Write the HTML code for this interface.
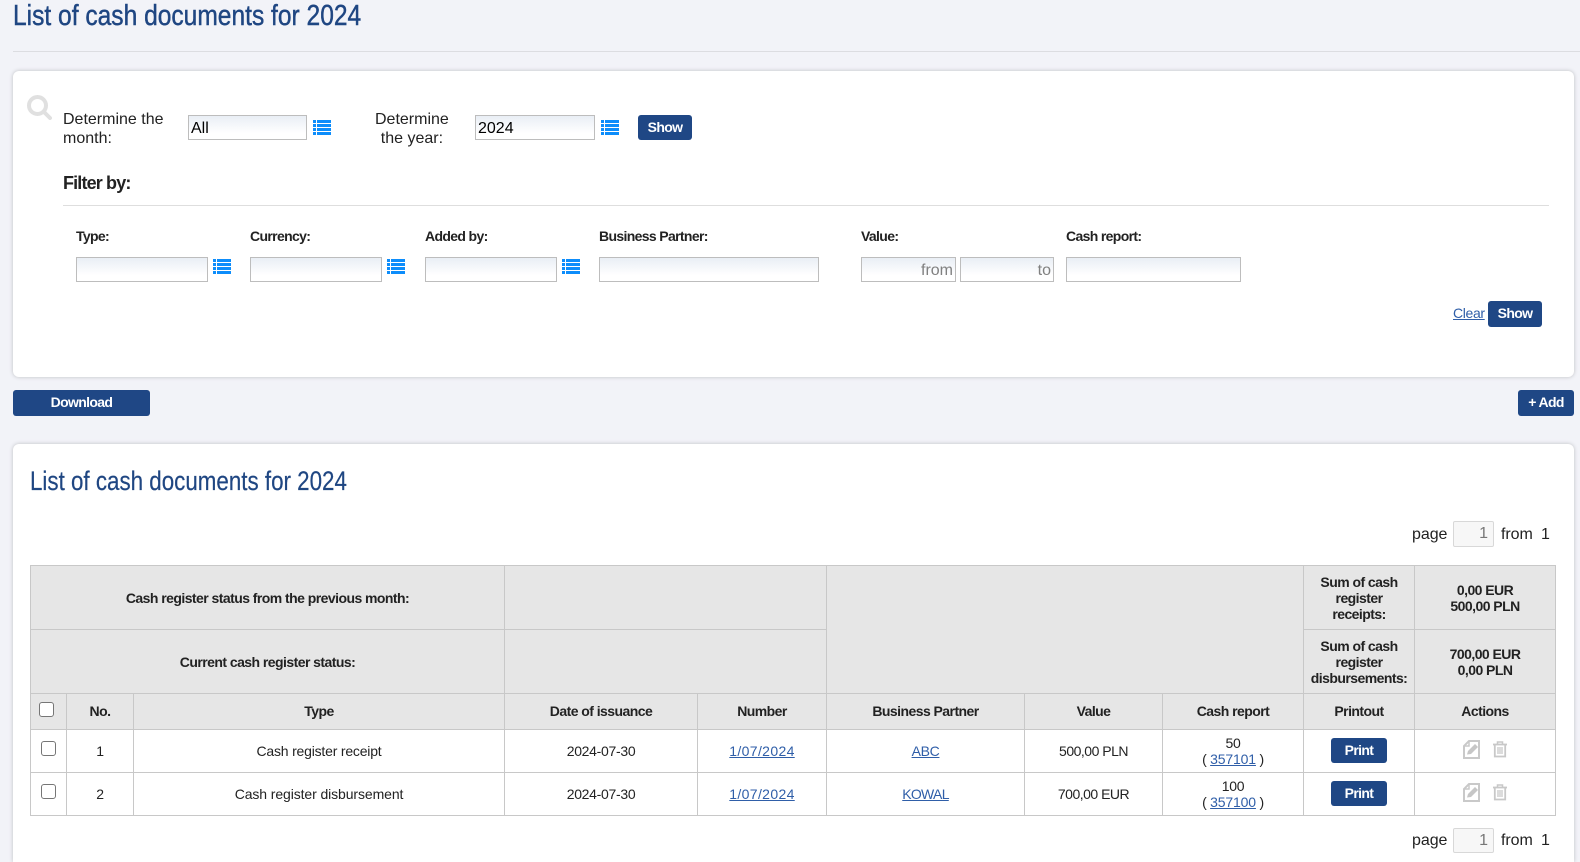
<!DOCTYPE html>
<html lang="en"><head><meta charset="utf-8"><title>List of cash documents for 2024</title>
<style>
*{box-sizing:border-box}
html,body{margin:0;padding:0;width:1580px;height:862px;overflow:hidden}
body{background:#f2f3f8;position:relative;font-family:"Liberation Sans",sans-serif;color:#222;font-size:14px}
.a{position:absolute;white-space:nowrap}
.card{position:absolute;left:13px;width:1561px;background:#fff;border-radius:6px;box-shadow:0 0 4px rgba(0,0,0,.22)}
.title{color:#1f4682;transform-origin:0 0;line-height:30px}
.lbl{font-size:16px;line-height:19px;letter-spacing:0}
.b{font-weight:bold;font-size:14px;letter-spacing:-.65px;line-height:16px}
.inp{position:absolute;height:25px;border:1px solid #bdbdbd;background:linear-gradient(#e9eef5,#fff 75%);font-size:16px;line-height:25px;padding:0 2px;color:#000}
.ph{color:#808080;text-align:right}
.btn{position:absolute;background:#1f4785;color:#fff;border-radius:3px;font-weight:bold;font-size:14px;letter-spacing:-.65px;text-align:center;height:26px;line-height:25px}
.ico{position:absolute;width:18px;height:15px}
a{color:#2f5ea8;text-decoration:underline}
table{position:absolute;left:30px;top:565px;width:1525px;table-layout:fixed;border-collapse:collapse;font-size:14px;line-height:16px;text-align:center}
th,td{border:1px solid #c8c8c8;padding:0;letter-spacing:-.3px;position:relative}
th{background:#e6e6e6;font-weight:bold;color:#222;letter-spacing:-.55px}
.h3 th{padding-bottom:2px}
.cb{position:absolute;width:15px;height:15px;background:#fff;border:1px solid #767676;border-radius:3px}
.pg{position:absolute;width:41px;height:26px;background:#f7f7f7;border:1px solid #d8d8d8;border-radius:2px;color:#777;font-size:16px;line-height:23px;text-align:right;padding-right:5px}
.n1{letter-spacing:.35px}
.n2{letter-spacing:-.5px}
.n3{letter-spacing:-.1px}
.n4{letter-spacing:-.2px}
.n5{letter-spacing:-.7px}
.n6{letter-spacing:-.15px}
</style></head><body>
<svg width="0" height="0" style="position:absolute"><defs>
<g id="l" fill="#0d8dfb"><rect x="0" y="0" width="3" height="3"/><rect x="4" y="0" width="14" height="3"/><rect x="0" y="4" width="3" height="3"/><rect x="4" y="4" width="14" height="3"/><rect x="0" y="8" width="3" height="3"/><rect x="4" y="8" width="14" height="3"/><rect x="0" y="12" width="3" height="3"/><rect x="4" y="12" width="14" height="3"/></g>
<g id="e"><path d="M6 1H16V18H1V6Z" fill="none" stroke="#c9c9c9" stroke-width="2"/><path d="M1 6H6V1" fill="none" stroke="#c9c9c9" stroke-width="1.500"/><path d="M4 14.500L5 11L12 4L15 7L8 14Z" fill="#c6c6c6"/></g>
<g id="t" fill="none" stroke="#c8c8c8"><path d="M0 3.500H14" stroke-width="1.800"/><path d="M4.500 3V1H9.500V3" stroke-width="1.500"/><path d="M1.800 4V15.500H12.200V4" stroke-width="1.800"/><path d="M5 6V13M7 6V13M9 6V13" stroke-width="1.300"/></g>
</defs></svg>

<div class="a title" style="left:13px;top:1px;font-size:29px;transform:scaleX(.847);-webkit-text-stroke:.45px #1f4682">List of cash documents for 2024</div>
<div class="a" style="left:13px;top:51px;width:1567px;height:1px;background:#dcdde1"></div>

<div class="card" style="top:71px;height:306px"></div>
<svg class="a" style="left:27px;top:95px" width="25" height="25" viewBox="0 0 25 25"><circle cx="10.500" cy="10.500" r="8.500" fill="none" stroke="#e0e0e0" stroke-width="4"/><path d="M16.500 16.500L23 23" stroke="#e0e0e0" stroke-width="4" stroke-linecap="round"/></svg>
<div class="a lbl" style="left:63px;top:109px;padding-top:1px">Determine the<br>month:</div>
<div class="inp" style="left:188px;top:115px;width:119px">All</div>
<svg class="ico" style="left:313px;top:120px"><use href="#l"/></svg>
<div class="a lbl" style="left:375px;top:110px;text-align:center">Determine<br>the year:</div>
<div class="inp" style="left:475px;top:115px;width:120px">2024</div>
<svg class="ico" style="left:601px;top:120px"><use href="#l"/></svg>
<div class="btn" style="left:638px;top:115px;width:54px;height:25px">Show</div>
<div class="a" style="left:63px;top:173px;font-size:18px;font-weight:bold;line-height:20px;letter-spacing:-.85px">Filter by:</div>
<div class="a" style="left:63px;top:205px;width:1486px;height:1px;background:#dedede"></div>

<div class="a b" style="left:76px;top:228px">Type:</div>
<div class="a b" style="left:250px;top:228px">Currency:</div>
<div class="a b" style="left:425px;top:228px">Added by:</div>
<div class="a b" style="left:599px;top:228px">Business Partner:</div>
<div class="a b" style="left:861px;top:228px">Value:</div>
<div class="a b" style="left:1066px;top:228px">Cash report:</div>

<div class="inp" style="left:76px;top:257px;width:132px"></div>
<svg class="ico" style="left:213px;top:259px"><use href="#l"/></svg>
<div class="inp" style="left:250px;top:257px;width:132px"></div>
<svg class="ico" style="left:387px;top:259px"><use href="#l"/></svg>
<div class="inp" style="left:425px;top:257px;width:132px"></div>
<svg class="ico" style="left:562px;top:259px"><use href="#l"/></svg>
<div class="inp" style="left:599px;top:257px;width:220px"></div>
<div class="inp ph" style="left:861px;top:257px;width:95px">from</div>
<div class="inp ph" style="left:960px;top:257px;width:94px">to</div>
<div class="inp" style="left:1066px;top:257px;width:175px"></div>

<a class="a" style="left:1453px;top:305px;font-size:14px;line-height:16px;letter-spacing:-.35px">Clear</a>
<div class="btn" style="left:1488px;top:301px;width:54px">Show</div>
<div class="btn" style="left:13px;top:390px;width:137px">Download</div>
<div class="btn" style="left:1518px;top:390px;width:56px">+ Add</div>

<div class="card" style="top:444px;height:418px;border-radius:6px 6px 0 0"></div>
<div class="a title" style="left:30px;top:466px;font-size:27px;transform:scaleX(.828);-webkit-text-stroke:.2px #1f4682">List of cash documents for 2024</div>

<div class="a" style="left:1412px;top:525px;font-size:16px;line-height:19px;letter-spacing:-.05px">page</div>
<div class="pg" style="left:1453px;top:521px">1</div>
<div class="a" style="left:1501px;top:525px;font-size:16px;line-height:19px;letter-spacing:-.05px">from</div>
<div class="a" style="left:1541px;top:525px;font-size:16px;line-height:19px">1</div>

<table>
<colgroup><col style="width:36px"><col style="width:67px"><col style="width:371px"><col style="width:193px"><col style="width:129px"><col style="width:198px"><col style="width:138px"><col style="width:141px"><col style="width:111px"><col style="width:141px"></colgroup>
<tr style="height:64px"><th colspan="3">Cash register status from the previous month:</th><th colspan="2"></th><th colspan="3" rowspan="2"></th><th>Sum of cash<br>register<br>receipts:</th><th>0,00 EUR<br>500,00 PLN</th></tr>
<tr style="height:64px"><th colspan="3">Current cash register status:</th><th colspan="2"></th><th>Sum of cash<br>register<br>disbursements:</th><th>700,00 EUR<br>0,00 PLN</th></tr>
<tr class="h3" style="height:36px"><th></th><th>No.</th><th>Type</th><th>Date of issuance</th><th>Number</th><th>Business Partner</th><th>Value</th><th>Cash report</th><th>Printout</th><th>Actions</th></tr>
<tr style="height:43px"><td></td><td>1</td><td class="n4">Cash register receipt</td><td>2024-07-30</td><td><a class="n1">1/07/2024</a></td><td><a>ABC</a></td><td class="n2">500,00 PLN</td><td>50<br>( <a class="n6">357101</a> )</td><td></td><td></td></tr>
<tr style="height:43px"><td></td><td>2</td><td class="n3">Cash register disbursement</td><td>2024-07-30</td><td><a class="n1">1/07/2024</a></td><td><a class="n5">KOWAL</a></td><td class="n2">700,00 EUR</td><td>100<br>( <a class="n6">357100</a> )</td><td></td><td></td></tr>
</table>

<div class="cb" style="left:39px;top:702px"></div>
<div class="cb" style="left:41px;top:741px"></div>
<div class="cb" style="left:41px;top:784px"></div>
<div class="btn" style="left:1331px;top:738px;width:56px;height:25px">Print</div>
<div class="btn" style="left:1331px;top:781px;width:56px;height:25px">Print</div>
<svg class="a" style="left:1463px;top:740px" width="17" height="19"><use href="#e"/></svg>
<svg class="a" style="left:1493px;top:741px" width="14" height="17"><use href="#t"/></svg>
<svg class="a" style="left:1463px;top:783px" width="17" height="19"><use href="#e"/></svg>
<svg class="a" style="left:1493px;top:784px" width="14" height="17"><use href="#t"/></svg>

<div class="a" style="left:1412px;top:831px;font-size:16px;line-height:19px;letter-spacing:-.05px">page</div>
<div class="pg" style="left:1453px;top:828px;height:25px">1</div>
<div class="a" style="left:1501px;top:831px;font-size:16px;line-height:19px;letter-spacing:-.05px">from</div>
<div class="a" style="left:1541px;top:831px;font-size:16px;line-height:19px">1</div>
</body></html>
